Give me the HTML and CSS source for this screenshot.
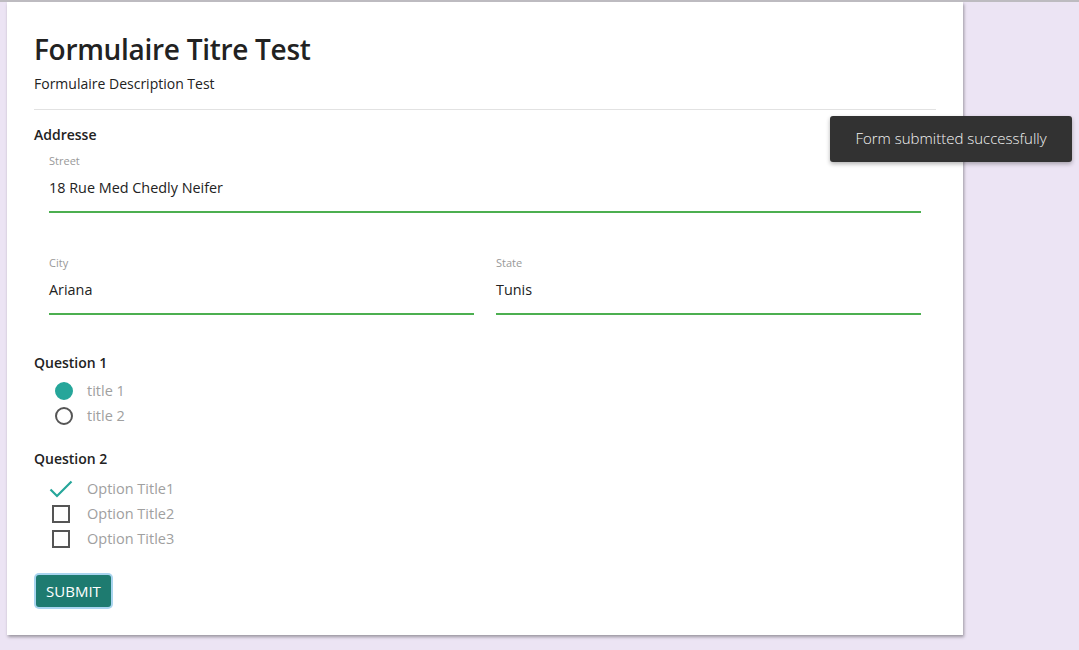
FILE: index.html
```html
<!DOCTYPE html>
<html lang="fr">
<head>
<meta charset="utf-8">
<title>Formulaire</title>
<link rel="stylesheet" href="styles.css">
</head>
<body>
<div class="page">
  <form class="card">
    <h1 class="title">Formulaire Titre Test</h1>
    <p class="desc">Formulaire Description Test</p>
    <hr class="divider">
    <div class="group-label">Addresse</div>
    <div class="fields">
      <div class="field">
        <label class="field-label">Street</label>
        <div class="field-value">18 Rue Med Chedly Neifer</div>
      </div>
      <div class="row">
        <div class="field">
          <label class="field-label">City</label>
          <div class="field-value">Ariana</div>
        </div>
        <div class="field">
          <label class="field-label">State</label>
          <div class="field-value">Tunis</div>
        </div>
      </div>
    </div>
    <div class="group-label q1">Question 1</div>
    <div class="options">
      <div class="option"><span class="radio checked"></span><span class="opt-text">title 1</span></div>
      <div class="option"><span class="radio"></span><span class="opt-text">title 2</span></div>
    </div>
    <div class="group-label q2">Question 2</div>
    <div class="options checks">
      <div class="option"><span class="check-icon"><svg width="24" height="18" viewBox="0 0 24 18"><path d="M1.5 9.5 L8 16 L22.5 1.5" fill="none" stroke="#26a69a" stroke-width="2.2"/></svg></span><span class="opt-text">Option Title1</span></div>
      <div class="option"><span class="check-icon"><span class="box"></span></span><span class="opt-text">Option Title2</span></div>
      <div class="option"><span class="check-icon"><span class="box"></span></span><span class="opt-text">Option Title3</span></div>
    </div>
    <button type="button" class="submit">SUBMIT</button>
  </form>
  <div class="toast">Form submitted successfully</div>
</div>
</body>
</html>
```

FILE: styles.css
```css
html, body {
  margin: 0;
  padding: 0;
}
body {
  background: #ece4f4;
  font-family: "Open Sans", "Noto Sans", sans-serif;
  color: #222;
  border-top: 2px solid #bdbbc0;
  height: 648px;
  overflow: hidden;
}
.page {
  position: relative;
  padding: 0 0 0 7px;
}
.card {
  width: 956px;
  height: 633px;
  box-sizing: border-box;
  background: #fff;
  padding: 27px 27px 0 27px;
  box-shadow: 1px 2px 3px rgba(0,0,0,0.35);
  display: flex;
  flex-direction: column;
  align-items: flex-start;
}
.title {
  margin: 0;
  font-size: 28px;
  font-weight: 600;
  line-height: 40px;
  color: #222;
  letter-spacing: -0.3px;
}
.desc {
  margin: 5px 0 0 0;
  font-size: 14px;
  line-height: 20px;
  color: #222;
}
.divider {
  align-self: stretch;
  border: 0;
  border-top: 1px solid #e2e2e2;
  margin: 15px 0 0 0;
}
.group-label {
  font-size: 14px;
  font-weight: 600;
  line-height: 20px;
  margin-top: 15px;
  color: #222;
}
.fields {
  align-self: stretch;
  padding: 0 15px;
  display: flex;
  flex-direction: column;
}
.field {
  display: flex;
  flex-direction: column;
  border-bottom: 2px solid #4caf50;
  flex: 1;
}
.field-label {
  font-size: 11px;
  line-height: 14px;
  color: #999;
  margin-top: 9px;
}
.field-value {
  font-size: 14.4px;
  line-height: 20px;
  padding: 10px 0 13px 0;
  color: #222;
}
.row {
  display: flex;
  gap: 22px;
  margin-top: 34px;
}
.q1 { margin-top: 38px; }
.q2 { margin-top: 21px; }
.options {
  display: flex;
  flex-direction: column;
  padding-left: 15px;
  margin-top: 5px;
}
.options.checks {
  margin-top: 7px;
}
.option {
  display: flex;
  align-items: center;
  height: 25px;
}
.radio {
  width: 14px;
  height: 14px;
  border: 2px solid #555;
  border-radius: 50%;
  margin-left: 6px;
  margin-right: 14px;
  flex: none;
}
.radio.checked {
  border-color: #26a69a;
  background: #26a69a;
}
.check-icon {
  width: 24px;
  height: 20px;
  display: flex;
  align-items: center;
  justify-content: center;
  margin-right: 14px;
  flex: none;
}
.box {
  width: 14px;
  height: 14px;
  border: 2px solid #555;
}
.opt-text {
  font-size: 14.5px;
  color: #a0a0a0;
}
.submit {
  margin-top: 24px;
  margin-left: 2px;
  background: #1e7b70;
  color: #fff;
  border: 0;
  border-radius: 3px;
  font-family: inherit;
  font-size: 15px;
  height: 32px;
  width: 75px;
  padding: 0;
  box-shadow: 0 0 0 2px #a9d4ef;
}
.toast {
  position: absolute;
  left: 830px;
  top: 114px;
  width: 242px;
  height: 46px;
  box-sizing: border-box;
  background: #323232;
  color: #f4f4f4;
  font-size: 15px;
  font-weight: 300;
  border-radius: 3px;
  display: flex;
  align-items: center;
  justify-content: center;
  padding-bottom: 2px;
  box-shadow: 0 2px 4px rgba(0,0,0,0.3);
}
```
